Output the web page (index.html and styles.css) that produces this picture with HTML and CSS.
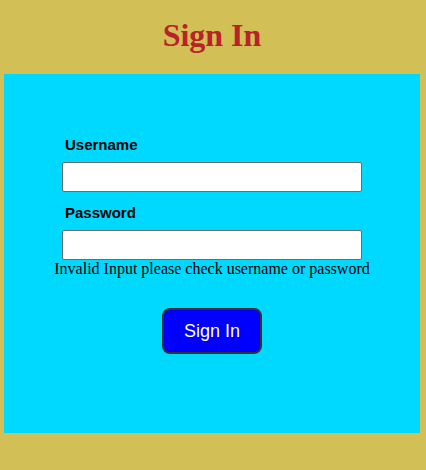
FILE: index.html
```html
<!DOCTYPE html>
<html>
<head>
<meta charset="utf-8">
<link rel="stylesheet" href="styles.css">
</head>
<body>
<header class="header"><h1 class="title">Sign In</h1></header>
<main class="card">
  <form class="form">
    <label class="label" for="u">Username</label>
    <input class="input" id="u" type="text">
    <label class="label label-pw" for="p">Password</label>
    <input class="input" id="p" type="password">
  </form>
  <p class="error">Invalid Input please check username or password</p>
  <div class="actions"><button class="btn" type="button">Sign In</button></div>
</main>
</body>
</html>
```
FILE: styles.css
```css
html, body { margin: 0; padding: 0; }
body {
  background: #d2bf55;
  padding: 0 6px 0 4px;
  height: 470px;
  box-sizing: border-box;
}
.header {
  height: 74px;
  display: flex;
  justify-content: center;
  align-items: flex-start;
}
.title {
  margin: 17px 0 0;
  font-family: "Liberation Serif", serif;
  font-size: 32px;
  line-height: 36px;
  font-weight: bold;
  color: #b8232a;
}
.card {
  background: #00d9ff;
  height: 359px;
  padding-top: 62px;
  box-sizing: border-box;
}
.form {
  width: 300px;
  margin: 0 auto;
  display: flex;
  flex-direction: column;
}
.label {
  font-family: "Liberation Sans", Arial, sans-serif;
  font-weight: bold;
  font-size: 15px;
  line-height: 18px;
  color: #000;
  padding-left: 3px;
  margin-bottom: 8px;
}
.label-pw { margin-top: 12px; }
.input {
  height: 30px;
  box-sizing: border-box;
  border: 1px solid #6b6b6b;
  border-radius: 2px;
  background: #fff;
  margin: 0;
}
.error {
  margin: 0;
  font-family: "Liberation Serif", serif;
  font-size: 16px;
  line-height: 18px;
  text-align: center;
  color: #000;
  white-space: nowrap;
}
.actions {
  display: flex;
  justify-content: center;
  margin-top: 30px;
}
.btn {
  width: 100px;
  height: 46px;
  background: #0000ff;
  color: #fff;
  border: 2px solid #333;
  border-radius: 8px;
  font-family: "Liberation Sans", Arial, sans-serif;
  font-size: 18px;
}
```
